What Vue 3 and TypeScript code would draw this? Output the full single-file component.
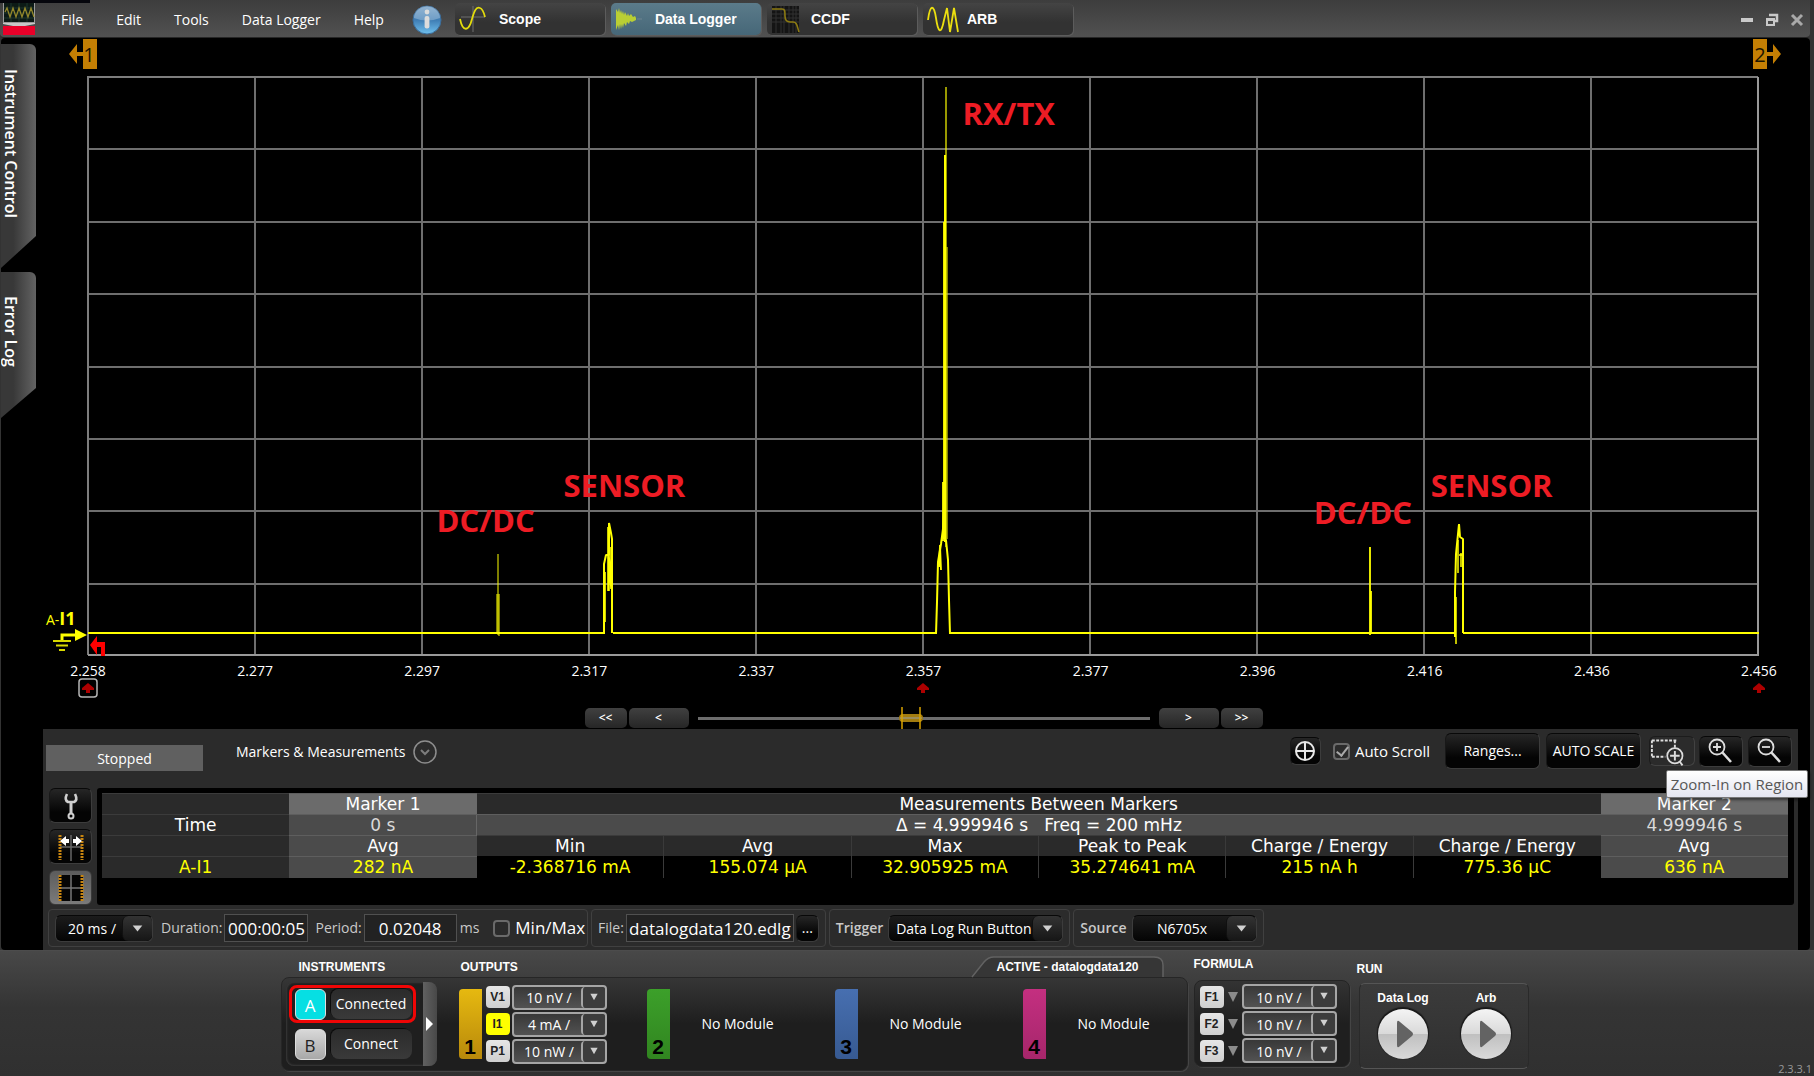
<script setup lang="ts">
import { ref } from 'vue'

interface Tick { label: string; marker?: 'boxed' | 'plain' }
interface Note { text: string; x: number; y: number }

const menus = ['File', 'Edit', 'Tools', 'Data Logger', 'Help']
const views = ['Scope', 'Data Logger', 'CCDF', 'ARB']
const activeView = ref('Data Logger')

const ticks: Tick[] = [
  { label: '2.258', marker: 'boxed' },
  { label: '2.277' },
  { label: '2.297' },
  { label: '2.317' },
  { label: '2.337' },
  { label: '2.357', marker: 'plain' },
  { label: '2.377' },
  { label: '2.396' },
  { label: '2.416' },
  { label: '2.436' },
  { label: '2.456', marker: 'plain' },
]

// Annotation centres in percent of the plot area
const notes: Note[] = [
  { text: 'RX/TX', x: 55.1, y: 6.2 },
  { text: 'SENSOR', x: 32.1, y: 70.4 },
  { text: 'DC/DC', x: 23.8, y: 76.3 },
  { text: 'DC/DC', x: 76.3, y: 75 },
  { text: 'SENSOR', x: 84, y: 70.4 },
]

const columns = [1, 2, 3, 4, 5, 6, 7, 8, 9].map((i) => i * 167)
const rows = [1, 2, 3, 4, 5, 6, 7].map((i) => Math.round(i * 72.4))

const measures = [
  { name: 'Min', value: '-2.368716 mA' },
  { name: 'Avg', value: '155.074 µA' },
  { name: 'Max', value: '32.905925 mA' },
  { name: 'Peak to Peak', value: '35.274641 mA' },
  { name: 'Charge / Energy', value: '215 nA h' },
  { name: 'Charge / Energy', value: '775.36 µC' },
]

const autoScroll = ref(true)
const minMax = ref(false)
const duration = ref('000:00:05')
const period = ref('0.02048')
const file = ref('datalogdata120.edlg')

const outputs = [
  { tag: 'V1', scale: '10 nV /', on: false },
  { tag: 'I1', scale: '4 mA /', on: true },
  { tag: 'P1', scale: '10 nW /', on: false },
]
const emptyModules = [
  { slot: 2, tone: 'green' },
  { slot: 3, tone: 'blue' },
  { slot: 4, tone: 'pink' },
]
const formulas = ['F1', 'F2', 'F3']
</script>

<template>
  <div class="app">
    <header class="titlebar">
      <svg class="logo" viewBox="0 0 32 32" aria-hidden="true">
        <rect width="32" height="20" fill="#9a9a9a" />
        <rect x="1" y="0" width="30" height="19" fill="#0c1a16" />
        <path d="M1 5h30M1 10h30M1 15h30M8 0v19M16 0v19M24 0v19" stroke="#1c352d" stroke-width="1" />
        <path d="M2 9l2-4 3 9 3-9 3 9 3-9 3 9 3-9 3 9 3-9 3 9" fill="none" stroke="#93872b" stroke-width="1.3" />
        <path d="M0 20h32v1l-10 2H10L0 21z" fill="#c8c8c8" />
        <rect y="23" width="32" height="9" fill="#e90029" />
      </svg>
      <nav class="menu">
        <button v-for="m in menus" :key="m" type="button">{{ m }}</button>
      </nav>
      <button class="info" type="button" aria-label="About">
        <svg viewBox="0 0 30 30">
          <defs>
            <linearGradient id="infoFill" x1="0" y1="0" x2="0" y2="1">
              <stop offset="0" stop-color="#6f9cc4" />
              <stop offset=".5" stop-color="#3f7db4" />
              <stop offset="1" stop-color="#6fc0ee" />
            </linearGradient>
          </defs>
          <circle cx="15" cy="15" r="14" fill="url(#infoFill)" stroke="#3b6d9b" />
          <path d="M2 13a13 12 0 0 1 26 0q-13 5-26 0z" fill="#fff" opacity=".25" />
          <circle cx="15" cy="7" r="2.4" fill="#dcdcdc" />
          <rect x="12.6" y="11" width="4.8" height="12.5" rx="2" fill="#dcdcdc" />
        </svg>
      </button>
      <div class="views">
        <button
          v-for="v in views"
          :key="v"
          type="button"
          class="view"
          :class="{ active: v === activeView }"
          @click="activeView = v"
        >
          <svg v-if="v === 'Scope'" viewBox="0 0 32 30">
            <path d="M14 2v26M2 13h24" stroke="#6f6f6f" />
            <path d="M1 15c3 14 9 12 12 0 2-7 4-13 8-11 3 1 4 5 5 9" fill="none" stroke="#e3dc0c" stroke-width="1.8" />
          </svg>
          <svg v-else-if="v === 'Data Logger'" viewBox="0 0 32 30">
            <path d="M22 15h5" stroke="#6f8590" />
            <path d="M1 26V5l2 3 1-4 1 5 1-3 1 4 1-3 1 4 1-3 2 4 1-3 1 3 2-2 2 3 2-1 1 2v2l-2 1-2 1-2-1-1 3-2-2-1 4-2-3-1 5-1-4-1 5-1-5-1 6-1-5z" fill="#b9cf34" />
          </svg>
          <svg v-else-if="v === 'CCDF'" viewBox="0 0 32 30">
            <rect x="1" y="2" width="27" height="27" fill="#141414" />
            <path d="M1 6h27M1 10h27M1 14h27M1 18h27M5 2v27M10 2v27M13 2v27M18 2v27M22 2v27M25 2v27" stroke="#303030" />
            <path d="M1 5h10c3 0 3 2 3 7s2 6 5 6h3c4 0 4 4 6 10" fill="none" stroke="#8d7b12" stroke-width="1.6" />
          </svg>
          <svg v-else viewBox="0 0 32 30">
            <path d="M1 16C3 0 7 0 9 14s5 18 8 2l3-12 3 24 4-24 4 24" fill="none" stroke="#ecdf10" stroke-width="1.8" />
          </svg>
          <span>{{ v }}</span>
        </button>
      </div>
      <div class="window-controls">
        <button type="button" aria-label="Minimize">
          <svg viewBox="0 0 14 14"><rect x="1" y="5" width="12" height="4" fill="#c9c9c9" /></svg>
        </button>
        <button type="button" aria-label="Restore">
          <svg viewBox="0 0 14 14">
            <path d="M4 2h8v6h-2" fill="none" stroke="#c9c9c9" stroke-width="2.5" />
            <path d="M2 7h7v5H2z" fill="none" stroke="#c9c9c9" stroke-width="2" />
            <path d="M1 6.5h9" stroke="#c9c9c9" stroke-width="3" />
          </svg>
        </button>
        <button type="button" aria-label="Close">
          <svg viewBox="0 0 14 14"><path d="M2 2l10 10M12 2L2 12" stroke="#a9a9a9" stroke-width="3" /></svg>
        </button>
      </div>
    </header>

    <main class="workspace">
      <aside class="side">
        <button type="button" class="side-tab tall">Instrument Control</button>
        <button type="button" class="side-tab short">Error Log</button>
      </aside>

      <div class="content">
        <section class="chart">
          <div class="flags">
            <svg class="flag" viewBox="0 0 28 30" role="img" aria-label="Marker 1">
              <path d="M0 15L8 5v8h6V0h14v30H14V17H8v8z" fill="#c47f04" />
              <text x="20" y="23" text-anchor="middle">1</text>
            </svg>
            <svg class="flag" viewBox="0 0 28 30" role="img" aria-label="Marker 2">
              <path d="M28 15L20 5v8h-6V0H0v30h14V17h6v8z" fill="#c47f04" />
              <text x="7" y="23" text-anchor="middle">2</text>
            </svg>
          </div>

          <div class="plot">
            <svg class="grid" viewBox="0 0 1671 580" preserveAspectRatio="none" aria-hidden="true">
              <g stroke="#6e6e6e" stroke-width="2">
                <line v-for="x in columns" :key="'c' + x" :x1="x" :x2="x" y1="0" y2="578" />
                <line v-for="y in rows" :key="'r' + y" x1="0" x2="1670" :y1="y" :y2="y" />
              </g>
              <path d="M0 578V0h1670" fill="none" stroke="#7d7d7d" stroke-width="2" />
              <path d="M0 578h1670V0" fill="none" stroke="#999" stroke-width="2" />
              <g fill="none" stroke="#ff0" stroke-linejoin="bevel">
                <path d="M0 556H516M525 556H848M862 556H1366M1375 556H1671" stroke-width="2" />
                <path d="M410 477V558M409 517v38M411 517V559" stroke-width="1" />
                <path d="M516 557V487l2-9h3V446l2 10 1 6V556" stroke-width="2" />
                <path d="M517 545V495M520 514V450M521 514V478l2 34V470" stroke-width="1.6" />
                <path d="M848 557l1-32 1-40 3-18 2-15 2-42V145V463h1l2 20 1 40 1 34" stroke-width="2" />
                <path d="M858 10V470" stroke-width="1.2" />
                <path d="M857 78V465" stroke-width="2" />
                <path d="M856 145V462M855 405V464M851 490l1-22 1 25" stroke-width="1.8" />
                <path d="M859 170V462" stroke-width="1.2" stroke="#d8d800" />
                <path d="M1282 470V558M1283 514V556" stroke-width="1.8" />
                <path d="M1367 560V515l1-38 3-30 1 13 3 2V556" stroke-width="2" />
                <path d="M1368 567V520M1370 496V463M1373 490V476M1371 478h4" stroke-width="1.5" />
              </g>
            </svg>

            <span v-for="(n, i) in notes" :key="i" class="note" :style="{ left: n.x + '%', top: n.y + '%' }">{{ n.text }}</span>

            <div class="zero-mark">
              <span>A-<b>I1</b></span>
              <svg viewBox="0 0 34 22" aria-hidden="true">
                <path d="M9 12V6h15" fill="none" stroke="#ff0" stroke-width="3" />
                <path d="M22 0l12 6-12 6z" fill="#ff0" />
                <path d="M0 12h18M3 16.5h12M6 21h6" stroke="#d9d900" stroke-width="2" />
              </svg>
            </div>
            <svg class="trigger-mark" viewBox="0 0 16 20" aria-hidden="true">
              <path d="M0 9L7 0v6h8v14h-4V11H7v8z" fill="#f00" />
            </svg>
          </div>

          <div class="axis">
            <div v-for="t in ticks" :key="t.label" class="tick">
              <span>{{ t.label }}</span>
              <svg v-if="t.marker" viewBox="0 0 20 20" aria-hidden="true">
                <rect v-if="t.marker === 'boxed'" x="1" y="1" width="18" height="18" rx="3" fill="none" stroke="#b5b5b5" stroke-width="1.5" />
                <path d="M10 5l6 5v2h-4v3H8v-3H4v-2z" fill="#ad0000" />
              </svg>
            </div>
          </div>

          <div class="scroller">
            <button type="button" class="step">&lt;&lt;</button>
            <button type="button" class="step wide">&lt;</button>
            <div class="track">
              <svg viewBox="0 0 24 22" aria-hidden="true">
                <rect x="0" y="7" width="24" height="8" rx="4" fill="#a27c10" />
                <path d="M1 11h22" stroke="#9b8d5c" stroke-width="2" />
                <path d="M3 0v22M21 0v22" stroke="#d9a300" stroke-width="1.5" />
              </svg>
            </div>
            <button type="button" class="step wide">&gt;</button>
            <button type="button" class="step">&gt;&gt;</button>
          </div>
        </section>

        <section class="panel">
          <div class="toolbar">
            <div class="status">Stopped</div>
            <div class="heading">
              <span>Markers &amp; Measurements</span>
              <button type="button" class="expander" aria-label="Collapse">
                <svg viewBox="0 0 26 26">
                  <circle cx="13" cy="13" r="11" fill="none" stroke="#8d8d8d" stroke-width="1.5" />
                  <path d="M9 11l4 4 4-4" fill="none" stroke="#7d7d7d" stroke-width="2" />
                </svg>
              </button>
            </div>
            <button type="button" class="dark tool-cross" aria-label="Center">
              <svg viewBox="0 0 24 24">
                <g fill="none" stroke="#e8e8e8" stroke-width="2"><circle cx="12" cy="12" r="9" /><path d="M12 3v18M3 12h18" /></g>
              </svg>
            </button>
            <label class="check auto">
              <input v-model="autoScroll" type="checkbox" />
              <span>Auto Scroll</span>
            </label>
            <button type="button" class="dark big">Ranges...</button>
            <button type="button" class="dark big">AUTO SCALE</button>
            <div class="region">
              <button type="button" class="dark lit" aria-label="Zoom-In on Region" aria-describedby="region-tip">
                <svg viewBox="0 0 46 30">
                  <g fill="none" stroke="#dcdcdc">
                    <path d="M2 4h26M2 21h14M2 4v17M26 4v9" stroke-width="2" stroke-dasharray="3 1.5" />
                    <circle cx="26" cy="20" r="8" stroke-width="1.8" />
                    <path d="M26 15v10M21 20h10M31 26l3 4" stroke-width="2" />
                  </g>
                </svg>
              </button>
              <div id="region-tip" class="tooltip" role="tooltip">Zoom-In on Region</div>
            </div>
            <button type="button" class="dark zoom" aria-label="Zoom in">
              <svg viewBox="0 0 42 30">
                <g fill="none" stroke="#dedede"><circle cx="17" cy="11" r="7.5" stroke-width="1.8" /><path d="M17 7v8M13 11h8" stroke-width="1.8" /><path d="M22 16l9 10" stroke-width="2.6" /></g>
              </svg>
            </button>
            <button type="button" class="dark zoom" aria-label="Zoom out">
              <svg viewBox="0 0 42 30">
                <g fill="none" stroke="#dedede"><circle cx="17" cy="11" r="7.5" stroke-width="1.8" /><path d="M13 11h8" stroke-width="1.8" /><path d="M22 16l9 10" stroke-width="2.6" /></g>
              </svg>
            </button>
          </div>

          <div class="data-row">
            <div class="tools">
              <button type="button" class="dark tool" aria-label="Settings">
                <svg viewBox="0 0 30 30">
                  <path d="M11 3q-3 6 1 8h6q4-2 1-8" fill="none" stroke="#cfcfcf" stroke-width="2.6" />
                  <path d="M15 11v12" stroke="#cfcfcf" stroke-width="3" />
                  <circle cx="15" cy="25" r="2.5" fill="none" stroke="#cfcfcf" stroke-width="2" />
                </svg>
              </button>
              <button type="button" class="dark tool" aria-label="Bring markers on screen">
                <svg viewBox="0 0 30 30">
                  <path d="M15 3v26M4 15h22" stroke="#666" stroke-width="1.5" />
                  <path d="M4 3v25M26 3v25" stroke="#c88510" stroke-width="3" stroke-dasharray="2 1" />
                  <path d="M4 9l6-5v3h3v4h-3v3zM26 9l-6-5v3h-3v4h3v3z" fill="#fff" />
                </svg>
              </button>
              <button type="button" class="dark tool pressed" aria-label="Show markers">
                <svg viewBox="0 0 30 30">
                  <rect x="3" y="2" width="24" height="26" fill="#050505" />
                  <path d="M15 2v26M4 15h22" stroke="#777" stroke-width="1.5" />
                  <path d="M4 2v26M26 2v26" stroke="#c88510" stroke-width="3" stroke-dasharray="2 1" />
                </svg>
              </button>
            </div>
            <div class="table-wrap">
              <table>
                <tbody>
                  <tr>
                    <th></th>
                    <th class="mark head">Marker 1</th>
                    <th colspan="6">Measurements Between Markers</th>
                    <th class="mark head">Marker 2</th>
                  </tr>
                  <tr class="time">
                    <th>Time</th>
                    <td class="mark">0 s</td>
                    <td colspan="6" class="mark delta">Δ = 4.999946 s &nbsp; Freq = 200 mHz</td>
                    <td class="mark">4.999946 s</td>
                  </tr>
                  <tr>
                    <th></th>
                    <th class="mark">Avg</th>
                    <th v-for="(m, i) in measures" :key="i" class="measure">{{ m.name }}</th>
                    <th class="mark">Avg</th>
                  </tr>
                  <tr class="values">
                    <th>A-I1</th>
                    <td class="mark">282 nA</td>
                    <td v-for="(m, i) in measures" :key="i" class="measure value">{{ m.value }}</td>
                    <td class="mark">636 nA</td>
                  </tr>
                </tbody>
              </table>
            </div>
          </div>

          <div class="settings">
            <div class="group timing">
              <span class="combo time-div">
                <select aria-label="Time per division"><option>20 ms /</option></select>
                <svg viewBox="0 0 30 26" aria-hidden="true"><path d="M10 10h10l-5 6z" /></svg>
              </span>
              <label class="field">Duration:<input v-model="duration" class="w-duration" type="text" /></label>
              <label class="field">Period:<input v-model="period" class="w-period" type="text" /></label>
              <span class="unit">ms</span>
              <label class="check minmax">
                <input v-model="minMax" type="checkbox" />
                <span>Min/Max</span>
              </label>
            </div>
            <div class="group">
              <label class="field file">File:<input v-model="file" class="w-file" type="text" /></label>
              <button type="button" class="dark browse">...</button>
            </div>
            <div class="group named">
              <label for="trigger">Trigger</label>
              <span class="combo trigger">
                <select id="trigger"><option>Data Log Run Button</option></select>
                <svg viewBox="0 0 30 26" aria-hidden="true"><path d="M10 10h10l-5 6z" /></svg>
              </span>
            </div>
            <div class="group named">
              <label for="source">Source</label>
              <span class="combo source">
                <select id="source"><option>N6705x</option></select>
                <svg viewBox="0 0 30 26" aria-hidden="true"><path d="M10 10h10l-5 6z" /></svg>
              </span>
            </div>
          </div>
        </section>
      </div>
    </main>

    <footer class="dock">
      <section class="io">
        <div class="io-head">
          <h2 class="h-inst">INSTRUMENTS</h2>
          <h2>OUTPUTS</h2>
          <div class="file-tab">
            <svg viewBox="0 0 194 22" preserveAspectRatio="none" aria-hidden="true">
              <path d="M1 21L13 6q4-5 10-5H183q9 0 9 8v12" fill="#363636" stroke="#626262" stroke-width="1.5" />
            </svg>
            <span>ACTIVE - datalogdata120</span>
          </div>
        </div>
        <div class="io-panel">
          <div class="instruments">
            <div class="inst-list">
              <div class="inst selected">
                <span class="badge on">A</span>
                <button type="button" class="connect">Connected</button>
              </div>
              <div class="inst">
                <span class="badge">B</span>
                <button type="button" class="connect">Connect</button>
              </div>
            </div>
            <button type="button" class="handle" aria-label="Expand instruments">
              <svg viewBox="0 0 8 14"><path d="M0 0l7 7-7 7z" fill="#fff" /></svg>
            </button>
          </div>
          <div class="module">
            <div class="bar gold">1</div>
            <div class="channels">
              <template v-for="o in outputs" :key="o.tag">
                <button type="button" class="tag" :class="{ on: o.on }">{{ o.tag }}</button>
                <span class="scale">
                  <select :aria-label="o.tag + ' scale'"><option>{{ o.scale }}</option></select>
                  <svg viewBox="0 0 24 22" aria-hidden="true"><path d="M8 7h8l-4 7z" /></svg>
                </span>
              </template>
            </div>
          </div>
          <div v-for="m in emptyModules" :key="m.slot" class="module">
            <div class="bar" :class="m.tone">{{ m.slot }}</div>
            <span class="none">No Module</span>
          </div>
        </div>
      </section>

      <section class="formula">
        <h2>FORMULA</h2>
        <div class="formula-panel">
          <template v-for="f in formulas" :key="f">
            <button type="button" class="tag">{{ f }}</button>
            <svg class="drop" viewBox="0 0 10 10" aria-hidden="true"><path d="M0 0h10L5 10z" fill="#8b8b8b" /></svg>
            <span class="scale">
              <select :aria-label="f + ' scale'"><option>10 nV /</option></select>
              <svg viewBox="0 0 24 22" aria-hidden="true"><path d="M8 7h8l-4 7z" /></svg>
            </span>
          </template>
        </div>
      </section>

      <section class="run">
        <h2>RUN</h2>
        <div class="run-panel">
          <div v-for="r in ['Data Log', 'Arb']" :key="r" class="runner">
            <span>{{ r }}</span>
            <button type="button" :aria-label="'Run ' + r">
              <svg viewBox="0 0 18 28"><path d="M1 3q0-4 3-1l12 10q2 2 0 4L4 26q-3 3-3-1z" fill="#636363" /></svg>
            </button>
          </div>
        </div>
      </section>
      <span class="version">2.3.3.1</span>
    </footer>
  </div>
</template>

<style>
html,
body {
  margin: 0;
  background: #333;
}
</style>

<style scoped>
.app {
  display: flex;
  flex-direction: column;
  min-height: 100vh;
  background: #333;
  color: #fff;
  font: 14px/18px "Open Sans", "Noto Sans", sans-serif;
}
* {
  box-sizing: border-box;
}
button,
select,
input {
  margin: 0;
  padding: 0;
  border: 0;
  background: none;
  color: inherit;
  font: inherit;
}
svg {
  display: block;
}
h2 {
  margin: 0;
  font: bold 12px/14px "Liberation Sans", sans-serif;
}

/* Title bar */
.titlebar {
  display: flex;
  align-items: center;
  height: 38px;
  margin-right: 4px;
  padding-left: 3px;
  border-bottom: 1px solid #262626;
  border-radius: 0 0 4px 4px;
  background:
    linear-gradient(#05060c, #05060c) 0 0 / 90px 3px no-repeat,
    linear-gradient(#3d3d3d, #515151);
}
.logo {
  width: 32px;
  height: 32px;
  margin-top: 1px;
}
.menu {
  display: flex;
  gap: 33px;
  margin: 2px 28px 0 26px;
}
.info,
.info svg {
  width: 30px;
  height: 30px;
}
.info {
  margin-top: 3px;
}
.views {
  display: flex;
  gap: 6px;
  margin-left: 13px;
}
.view {
  display: flex;
  align-items: center;
  gap: 8px;
  width: 150px;
  height: 32px;
  padding-left: 4px;
  border-radius: 5px;
  background: linear-gradient(#444, #323232 60%);
  box-shadow: 1px 1px 0 #5c5c5c;
  font: bold 14px/18px "Liberation Sans", sans-serif;
}
.view svg {
  width: 32px;
  height: 30px;
}
.view.active {
  background: linear-gradient(#5b7b8a, #466778);
}
.window-controls {
  display: flex;
  gap: 11px;
  margin: 2px 6px 0 auto;
}
.window-controls svg {
  width: 14px;
  height: 14px;
}

/* Workspace */
.workspace {
  display: flex;
  flex: 1;
  margin: 0 4px 0 1px;
  border-radius: 4px;
  background: #000;
}
.side {
  display: flex;
  flex-direction: column;
  gap: 4px;
  width: 35px;
  padding-top: 6px;
}
.side-tab {
  width: 35px;
  padding-right: 15px;
  border-radius: 0 6px 0 0;
  background: linear-gradient(90deg, #383838 35%, #636363);
  font-weight: 600;
  font-size: 16px;
  line-height: 20px;
  text-align: left;
  writing-mode: vertical-rl;
}
.tall {
  height: 224px;
  padding-top: 25px;
  clip-path: polygon(0 0, 100% 0, 100% 192px, 0 100%);
}
.short {
  height: 146px;
  padding-top: 24px;
  clip-path: polygon(0 0, 100% 0, 100% 116px, 0 100%);
}
.content {
  display: flex;
  flex: 1;
  flex-direction: column;
  margin: 0 12px 0 7px;
}

/* Chart */
.chart {
  padding: 0 39px 0 45px;
}
.flags {
  display: flex;
  justify-content: space-between;
  height: 39px;
  margin: 0 -22px 0 -19px;
  padding-top: 1px;
}
.flag {
  width: 28px;
  height: 30px;
}
.flag text {
  fill: #1d1500;
  font-size: 20px;
}
.plot {
  position: relative;
}
.grid {
  width: 100%;
  height: 580px;
  overflow: visible;
}
.note {
  position: absolute;
  transform: translate(-50%, -50%);
  color: #ed1c24;
  font: bold 31px/38px "Open Sans", sans-serif;
  white-space: nowrap;
}
.zero-mark {
  position: absolute;
  right: 100%;
  top: 532px;
  width: 42px;
  color: #ff0;
  white-space: nowrap;
}
.zero-mark b {
  font-size: 18px;
}
.zero-mark svg {
  width: 34px;
  height: 22px;
  margin-left: 7px;
}
.trigger-mark {
  position: absolute;
  left: 2px;
  top: 559px;
  width: 16px;
  height: 20px;
}
.axis {
  display: flex;
  justify-content: space-between;
  height: 50px;
  padding-top: 5px;
}
.tick {
  display: flex;
  flex-direction: column;
  align-items: center;
  width: 0;
}
.tick svg {
  flex: none;
  width: 20px;
  height: 20px;
  margin-top: -2px;
}
.scroller {
  display: flex;
  align-items: center;
  justify-content: center;
  gap: 2px;
  height: 22px;
}
.step {
  width: 42px;
  height: 20px;
  border-radius: 5px;
  background: linear-gradient(#404040, #262626);
  font-weight: 600;
  font-size: 12px;
  line-height: 16px;
}
.step.wide {
  width: 60px;
}
.track {
  display: flex;
  justify-content: center;
  width: 452px;
  height: 22px;
  margin: 0 7px;
  padding-right: 26px;
  background: linear-gradient(#6d6d6d, #6d6d6d) center / 100% 3px no-repeat;
}
.track svg {
  width: 24px;
  height: 22px;
}

/* Measurements panel */
.panel {
  flex: 1;
  padding: 0 4px 3px 3px;
  background: #2b2b2b;
}
.toolbar {
  display: flex;
  align-items: center;
  height: 44px;
}
.status {
  align-self: flex-end;
  width: 157px;
  height: 26px;
  margin-bottom: 2px;
  background: #606060;
  line-height: 28px;
  text-align: center;
}
.heading {
  display: flex;
  align-items: center;
  gap: 7px;
  margin: 1px auto 0 33px;
}
.expander svg {
  width: 26px;
  height: 26px;
}
.dark {
  display: flex;
  align-items: center;
  justify-content: center;
  border: 1px solid #3c3c3c;
  border-top-color: #080808;
  border-left-color: #181818;
  border-radius: 6px;
  background: linear-gradient(#262626, #040404 70%);
}
.tool-cross {
  width: 31px;
  height: 28px;
  margin-right: 12px;
}
.tool-cross svg {
  width: 24px;
  height: 24px;
}
.check {
  display: flex;
  align-items: center;
  gap: 5px;
}
.check input {
  width: 17px;
  height: 17px;
  border: 2px solid #6a6a6a;
  border-radius: 4px;
  appearance: none;
}
.check input:checked::after {
  display: block;
  width: 5px;
  height: 10px;
  margin: -1px 0 0 4px;
  border: solid #a9a9a9;
  border-width: 0 2px 2px 0;
  content: "";
  transform: rotate(38deg);
}
.auto {
  margin-right: 15px;
  font-size: 15px;
}
.big {
  width: 95px;
  height: 36px;
  margin-right: 6px;
}
.region {
  position: relative;
  margin: 0 4px 0 2px;
}
.region .dark,
.region svg {
  width: 46px;
  height: 30px;
}
.lit {
  border-color: #1c1c1c #424242 #424242 #1c1c1c;
  background: #2b2b2b;
}
.zoom {
  width: 44px;
  height: 31px;
  margin-right: 5px;
}
.zoom:last-child {
  margin-right: 2px;
}
.zoom svg {
  width: 42px;
  height: 30px;
}
.tooltip {
  position: absolute;
  left: 17px;
  top: 34px;
  z-index: 2;
  width: 142px;
  height: 28px;
  border: 1px solid #777;
  border-radius: 2px;
  background: linear-gradient(#fff, #e4e5f0);
  box-shadow: 2px 2px 3px rgba(0, 0, 0, 0.5);
  color: #575757;
  font-size: 15px;
  line-height: 26px;
  text-align: center;
  white-space: nowrap;
}
.data-row {
  display: flex;
  gap: 5px;
  margin-top: 15px;
  padding-left: 3px;
}
.tools {
  display: flex;
  flex-direction: column;
  gap: 6px;
}
.tool {
  width: 43px;
  height: 35px;
}
.tool svg {
  width: 30px;
  height: 30px;
}
.pressed {
  border-color: #3a3a3a;
  background: linear-gradient(#5c5c5c, #7b7b7b);
}
.table-wrap {
  flex: 1;
  height: 117px;
  padding: 5px 6px 0 5px;
  border-radius: 3px;
  background: #000;
}
table {
  width: 100%;
  border-collapse: collapse;
  table-layout: fixed;
  font: 17px/20px "DejaVu Sans", sans-serif;
}
th,
td {
  height: 21px;
  padding: 0;
  border-top: 1px solid #3b3b3b;
  background: #2a2a2a;
  font-weight: 400;
  text-align: center;
  white-space: nowrap;
}
.mark {
  border-top-color: #5e5e5e;
  background: #4b4b4b;
}
.head {
  background: #6b6b6b;
}
.time td {
  color: #d9d9d9;
}
.time .delta {
  border-left: 1px solid #666;
  color: #fff;
}
.measure + .measure {
  border-left: 1px solid #3a3a3a;
}
.values {
  color: #ff0;
}
.value {
  border-top-color: #000;
  background: #000;
}

/* Acquisition settings */
.settings {
  display: flex;
  gap: 3px;
  margin-top: 4px;
  padding-left: 2px;
}
.group {
  display: flex;
  align-items: center;
  height: 38px;
  padding: 0 6px;
  border: 1px solid #404040;
  border-radius: 4px;
  color: #c9c9c9;
}
.combo {
  position: relative;
  height: 27px;
  border: 1px solid #3c3c3c;
  border-top-color: #080808;
  border-radius: 6px;
  background: linear-gradient(#1c1c1c, #040404);
}
.combo select,
.scale select {
  width: 100%;
  height: 100%;
  appearance: none;
  color: #fff;
  text-align-last: center;
}
.combo select {
  padding: 2px 28px 0 4px;
}
.combo svg {
  position: absolute;
  right: 0;
  top: 0;
  width: 30px;
  height: 25px;
  border-left: 1px solid #101010;
  border-radius: 6px;
  background: linear-gradient(#333, #161616);
  fill: #d0d0d0;
  pointer-events: none;
}
.time-div {
  width: 98px;
  margin-right: 8px;
}
.field {
  display: flex;
  align-items: center;
  gap: 2px;
  margin-right: 7px;
}
.field input {
  height: 28px;
  border: 1px solid #505050;
  background: #222;
  color: #fff;
  font-size: 17px;
  text-align: center;
}
.w-duration {
  width: 84px;
}
.w-period {
  width: 93px;
}
.w-file {
  width: 168px;
}
.unit {
  margin: 0 14px 0 -4px;
}
.minmax {
  color: #fff;
  font-size: 17px;
}
.timing {
  width: 540px;
  padding-right: 0;
  white-space: nowrap;
}
.file {
  margin-right: 2px;
}
.browse {
  width: 23px;
  height: 27px;
  color: #fff;
}
.named {
  gap: 5px;
  font-weight: 600;
}
.named select {
  font-weight: 400;
}
.trigger {
  width: 175px;
}
.source {
  width: 125px;
}

/* Bottom dock */
.dock {
  position: relative;
  display: flex;
  justify-content: center;
  height: 127px;
  padding-right: 5px;
  border-top: 1px solid #4c4c4c;
  background: linear-gradient(#484848, #343434 45%, #303030);
}
.io {
  width: 907px;
}
.io-head {
  display: flex;
  align-items: center;
  height: 26px;
  padding: 5px 23px 0 18px;
}
.h-inst {
  width: 162px;
}
.file-tab {
  position: relative;
  width: 194px;
  height: 22px;
  margin-left: auto;
  font: bold 12px/22px "Liberation Sans", sans-serif;
  text-align: center;
}
.file-tab svg {
  position: absolute;
  inset: 0;
  width: 194px;
  height: 22px;
}
.file-tab span {
  position: relative;
}
.io-panel {
  display: flex;
  height: 94px;
  padding: 4px;
  border: 1px solid #262626;
  border-radius: 8px;
  background: linear-gradient(#363636, #1e1e1e 50%);
  box-shadow: 1px 1px 0 #454545;
}
.instruments {
  display: flex;
  flex: none;
  width: 151px;
  height: 84px;
  overflow: hidden;
  border-radius: 8px;
  background: #1f1f1f;
  box-shadow: inset 0 0 3px #555;
}
.inst-list {
  display: flex;
  flex: 1;
  flex-direction: column;
  gap: 2px;
  padding: 3px 0 0 3px;
}
.inst {
  display: flex;
  align-items: center;
  gap: 5px;
  width: 127px;
  height: 38px;
  padding-left: 3px;
  border: 3px solid transparent;
  border-radius: 8px;
}
.selected {
  border-color: #f00606;
}
.badge {
  width: 31px;
  height: 31px;
  border: 1px solid #ddd;
  border-radius: 6px;
  background: linear-gradient(#d8d8d8, #a8a8a8);
  color: #222;
  font-size: 17px;
  line-height: 32px;
  text-align: center;
}
.badge.on {
  background: #06dfe3;
  color: #fff;
}
.connect {
  width: 81px;
  height: 30px;
  border-radius: 8px;
  background: linear-gradient(#2b2b2b, #3a3a3a);
  box-shadow: -1px -1px 0 #0c0c0c;
}
.handle {
  display: flex;
  align-items: center;
  width: 14px;
  padding-left: 3px;
  background: linear-gradient(90deg, #616161, #484848);
}
.handle svg {
  width: 8px;
  height: 14px;
}
.module {
  display: flex;
  flex: none;
  align-items: center;
  width: 188px;
}
.module:last-child {
  width: 161px;
}
.instruments + .module {
  margin-left: 22px;
}
.bar {
  display: flex;
  align-items: flex-end;
  justify-content: center;
  width: 23px;
  height: 70px;
  border-radius: 4px 0 0 4px;
  color: #000;
  font: bold 21px/24px "Liberation Sans", sans-serif;
}
.gold {
  background: linear-gradient(#e6b910, #b8890b);
}
.green {
  background: linear-gradient(#3ca02a, #318520);
}
.blue {
  background: linear-gradient(#476fb0, #375a92);
}
.pink {
  background: linear-gradient(#c42f80, #a6266b);
}
.none {
  width: 136px;
  text-align: center;
}
.channels {
  display: grid;
  grid-template-columns: 24px 95px;
  gap: 2px;
  align-items: center;
  margin-left: 4px;
}
.tag {
  width: 24px;
  height: 22px;
  border-radius: 4px;
  background: linear-gradient(#e6e6e6, #cfcfcf);
  color: #222;
  font: bold 12px/20px "Liberation Sans", sans-serif;
}
.tag.on {
  background: #ff0;
}
.scale {
  position: relative;
  width: 95px;
  height: 25px;
  border: 2px solid #a5a5a5;
  border-radius: 4px;
  background: linear-gradient(#383838, #525252);
}
.scale select {
  padding: 2px 22px 0 2px;
}
.scale svg {
  position: absolute;
  right: 0;
  top: 0;
  width: 24px;
  height: 21px;
  border-left: 2px solid #a5a5a5;
  border-radius: 4px;
  background: #3c3c3c;
  fill: #cfcfcf;
  pointer-events: none;
}
.formula {
  width: 156px;
  margin-left: 6px;
}
.formula h2 {
  height: 29px;
  padding-top: 6px;
}
.formula-panel {
  display: grid;
  grid-template-columns: 24px 10px 95px;
  align-content: center;
  align-items: center;
  gap: 2px 4px;
  height: 87px;
  padding-left: 5px;
  border: 1px solid #242424;
  border-radius: 8px;
  background: linear-gradient(#333, #1f1f1f 50%);
  box-shadow: 1px 1px 0 #454545;
}
.drop {
  width: 10px;
  height: 10px;
}
.run {
  width: 172px;
  margin-left: 7px;
}
.run h2 {
  height: 32px;
  padding-top: 11px;
}
.run-panel {
  display: flex;
  justify-content: space-around;
  height: 86px;
  margin-left: 2px;
  padding: 7px 0 0 2px;
  border: 1px solid #2a2a2a;
  border-top-color: #555;
  border-bottom-color: #555;
  border-radius: 6px;
  background: linear-gradient(#3b3b3b, #303030);
}
.runner {
  display: flex;
  flex-direction: column;
  align-items: center;
  gap: 3px;
  width: 80px;
  font: bold 12px/15px "Liberation Sans", sans-serif;
}
.runner button {
  display: flex;
  align-items: center;
  justify-content: center;
  width: 50px;
  height: 50px;
  border-radius: 50%;
  background: linear-gradient(#f4f4f4, #d9d9d9 50%, #c0c0c0 51%, #dadada);
  box-shadow: 0 -1px 1px 1px #191919;
}
.runner svg {
  width: 18px;
  height: 28px;
  margin-left: 4px;
}
.version {
  position: absolute;
  right: 2px;
  bottom: 1px;
  color: #9a9a9a;
  font-size: 11px;
  line-height: 14px;
}
</style>
